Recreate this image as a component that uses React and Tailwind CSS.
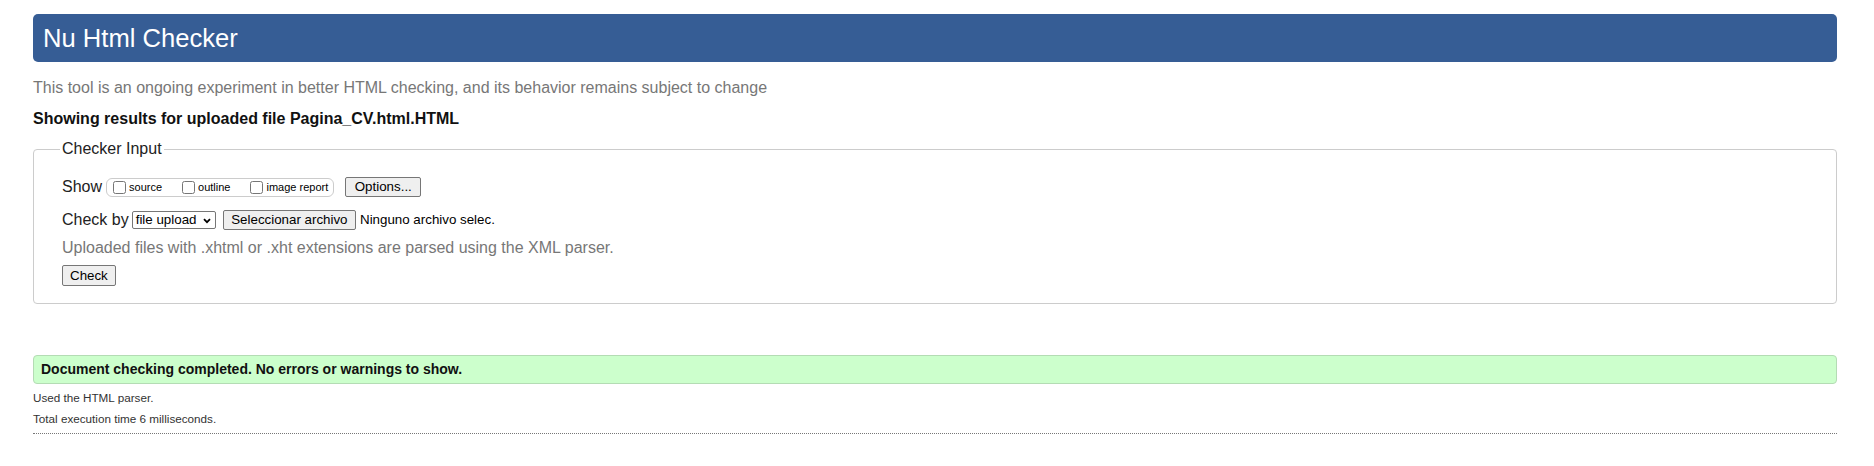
import React from "react";

const ff = { fontFamily: '"Liberation Sans", Arial, sans-serif' };

function Btn({ children, className = "" }) {
  return (
    <button
      type="button"
      className={`inline-flex items-center justify-center bg-[#efefef] border border-[#767676] rounded-[2px] text-[13.33px] leading-none text-black ${className}`}
    >
      {children}
    </button>
  );
}

function Check({ label }) {
  return (
    <label className="inline-flex items-center">
      <input
        type="checkbox"
        className="w-[13px] h-[13px] ml-[4px] mr-[3px] my-0"
      />
      <span className="text-[11px] text-black">{label}</span>
    </label>
  );
}

export default function App() {
  return (
    <div
      className="bg-white w-[1874px] h-[466px] pl-[33px] pr-[37px] pt-[14px] text-[#222]"
      style={ff}
    >
      <div className="h-[48px] rounded-[5px] bg-[#365d95] flex items-center pl-[10px]">
        <h1 className="text-[25.6px] font-normal text-white leading-[48px]">
          Nu Html Checker
        </h1>
      </div>

      <p className="mt-[16px] text-[16px] leading-[20px] text-[#777]">
        This tool is an ongoing experiment in better HTML checking, and its
        behavior remains subject to change
      </p>

      <p className="mt-[11px] text-[16px] leading-[20px] font-bold text-[#111]">
        Showing results for uploaded file Pagina_CV.html.HTML
      </p>

      <div className="relative mt-[20px] border border-[#cccccc] rounded-[4px] pt-[27px] pb-[16px] pl-[28px]">
        <div className="absolute -top-[11px] left-[26px] bg-white px-[2px] text-[16px] leading-[20px] text-[#222]">
          Checker Input
        </div>

        <div className="flex items-center h-[20px]">
          <span className="text-[16px] leading-[20px] mr-[4px]">Show</span>
          <div className="inline-flex items-center h-[19px] border border-[#cccccc] rounded-[6px] pl-[2px] pr-[5px] gap-[16px]">
            <Check label="source" />
            <Check label="outline" />
            <Check label="image report" />
          </div>
          <Btn className="ml-[11px] h-[20px] px-[8.5px]">Options...</Btn>
        </div>

        <div className="flex items-center h-[20px] mt-[13px]">
          <span className="text-[16px] leading-[20px] mr-[3px]">Check by</span>
          <div className="inline-flex items-center h-[18px] w-[84px] border border-[#767676] rounded-[2px] pl-[3px] pr-[4px] text-[13.33px] text-black">
            <span className="flex-1">file upload</span>
            <svg width="8" height="6" viewBox="0 0 8 6" className="mt-[1px]">
              <path
                d="M1 1.2 L4 4.2 L7 1.2"
                fill="none"
                stroke="#000"
                strokeWidth="1.8"
              />
            </svg>
          </div>
          <Btn className="ml-[7px] h-[20px] px-[7.5px]">Seleccionar archivo</Btn>
          <span className="ml-[4px] text-[13.33px] text-black">
            Ninguno archivo selec.
          </span>
        </div>

        <p className="mt-[8px] text-[16px] leading-[20px] text-[#777]">
          Uploaded files with .xhtml or .xht extensions are parsed using the
          XML parser.
        </p>

        <Btn className="mt-[7px] h-[21px] px-[7px]">Check</Btn>
      </div>

      <div className="mt-[51px] h-[29px] flex items-center border border-[#b4dcb4] bg-[#ccffcc] rounded-[4px] pl-[7px]">
        <span className="text-[14px] font-bold text-[#111]">
          Document checking completed. No errors or warnings to show.
        </span>
      </div>

      <p className="mt-[3px] text-[11.7px] leading-[21px] text-[#333]">
        Used the HTML parser.
      </p>
      <p className="text-[11.7px] leading-[21px] text-[#333]">
        Total execution time 6 milliseconds.
      </p>
      <div className="mt-[4px] border-t border-dotted border-[#777]"></div>
    </div>
  );
}
